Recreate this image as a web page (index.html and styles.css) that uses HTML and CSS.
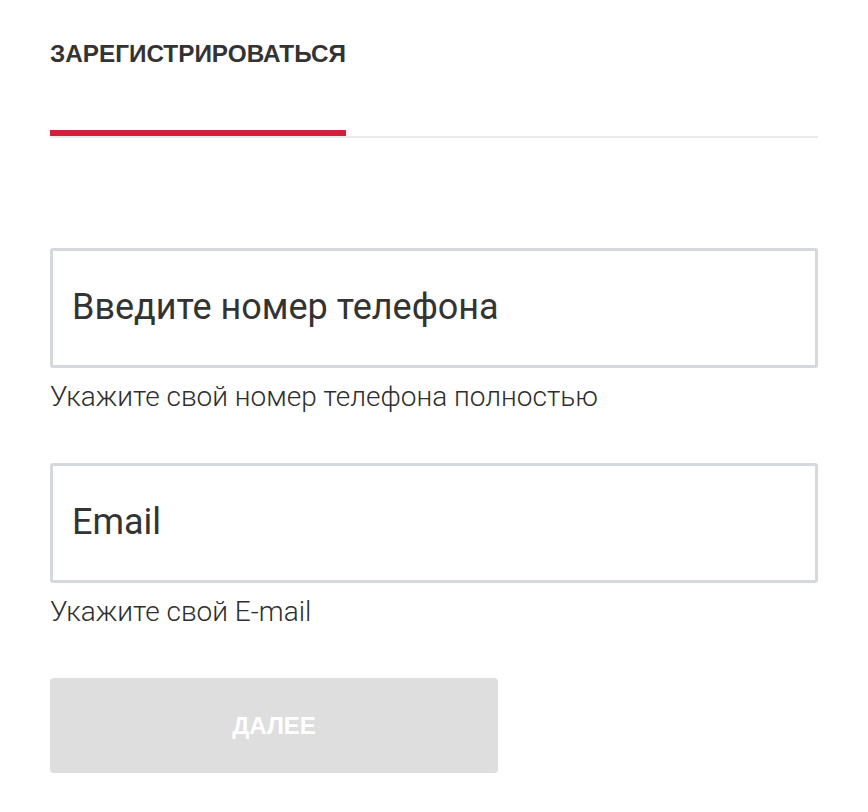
FILE: index.html
```html
<!DOCTYPE html>
<html lang="ru">
<head>
<meta charset="utf-8">
<title>Регистрация</title>
<link rel="stylesheet" href="styles.css">
</head>
<body>
<div class="page">
  <div class="tabs">
    <div class="tab tab-active">ЗАРЕГИСТРИРОВАТЬСЯ</div>
  </div>
  <form class="form">
    <div class="field">
      <div class="input"><span class="placeholder">Введите номер телефона</span></div>
      <div class="hint">Укажите свой номер телефона полностью</div>
    </div>
    <div class="field">
      <div class="input"><span class="placeholder">Email</span></div>
      <div class="hint">Укажите свой E-mail</div>
    </div>
    <div class="button">ДАЛЕЕ</div>
  </form>
</div>
</body>
</html>
```

FILE: styles.css
```css
html, body {
  margin: 0;
  padding: 0;
  background: #ffffff;
}

.page {
  width: 768px;
  padding: 0 50px;
  font-family: Roboto, "Noto Sans", sans-serif;
  color: #333333;
}

.tabs {
  display: flex;
  border-bottom: 2px solid #ebebeb;
}

.tab {
  padding-top: 40px;
  padding-bottom: 62px;
  font-family: "Liberation Sans", Arial, sans-serif;
  font-weight: 700;
  font-size: 24.3px;
  line-height: 28px;
  color: #333333;
  border-bottom: 6px solid transparent;
}

.tab-active {
  border-bottom-color: #d21f3c;
}

.form {
  display: flex;
  flex-direction: column;
  padding-top: 110px;
}

.field {
  display: flex;
  flex-direction: column;
  margin-bottom: 50px;
}

.input {
  box-sizing: border-box;
  height: 120px;
  border: 3px solid #d5d8dc;
  border-radius: 3px;
  display: flex;
  align-items: center;
  padding: 0 17px 2px 19px;
}

.placeholder {
  font-size: 36px;
  line-height: 42px;
  color: #333333;
}

.hint {
  margin-top: 13px;
  font-size: 28px;
  font-weight: 300;
  line-height: 32px;
  color: #2e2e2e;
}

.button {
  box-sizing: border-box;
  width: 448px;
  height: 95px;
  background: #dedede;
  border-radius: 4px;
  display: flex;
  align-items: center;
  justify-content: center;
  font-family: "Liberation Sans", Arial, sans-serif;
  font-weight: 700;
  font-size: 24px;
  color: #ffffff;
}
```
